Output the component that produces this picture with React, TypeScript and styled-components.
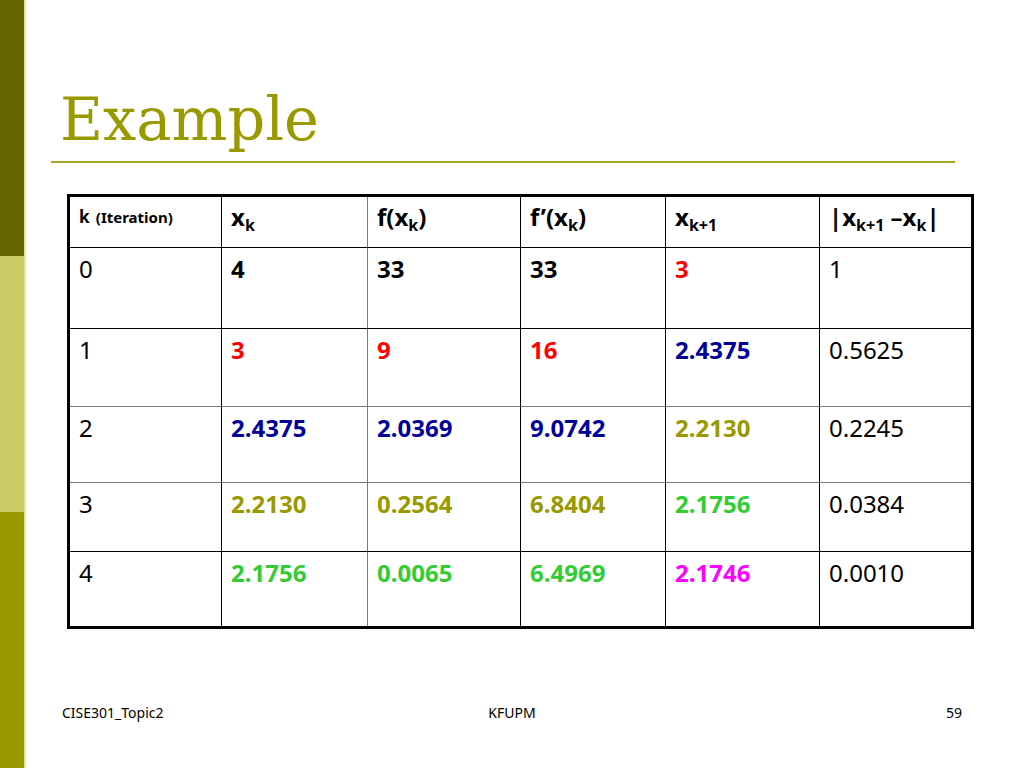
import React from 'react';
import styled, { createGlobalStyle } from 'styled-components';

const GlobalStyle = createGlobalStyle`
  html, body { margin: 0; padding: 0; background: #fff; }
  body { font-family: "Noto Sans", "Open Sans", sans-serif; }
`;

const Slide = styled.div`
  width: 1024px;
  height: 768px;
  display: flex;
  overflow: hidden;
  background: #fff;
`;

const Sidebar = styled.div`
  width: 24px;
  flex: none;
  display: flex;
  flex-direction: column;
  border-right: 2px solid #e6e68c;
`;

const Band = styled.div<{ $color: string }>`
  flex: 1;
  background: ${(p) => p.$color};
`;

const Main = styled.div`
  flex: 1;
  display: flex;
  flex-direction: column;
`;

const Title = styled.h1`
  margin: 90px 0 0 34px;
  height: 59px;
  font-family: "DejaVu Serif", "Liberation Serif", serif;
  font-weight: normal;
  font-size: 59px;
  line-height: 59px;
  letter-spacing: 0;
  color: #999900;
`;

const Rule = styled.div`
  margin: 12px 0 0 25px;
  width: 904px;
  height: 2px;
  background: #a6a622;
`;

const Grid = styled.div`
  margin: 31px 0 0 41px;
  width: 907px;
  box-sizing: border-box;
  border: 3px solid #000;
  display: grid;
  grid-template-columns: 152px 146px 153px 145px 154px 151px;
  grid-template-rows: 51px 81px 78px 76px 69px 74px;
  font-family: "Noto Sans", "Open Sans", sans-serif;
`;

const Cell = styled.div<{
  $lastCol: boolean;
  $lastRow: boolean;
  $vLine: string;
  $hLine: string;
  $color: string;
  $bold: boolean;
  $head?: boolean;
}>`
  box-sizing: border-box;
  padding: ${(p) => (p.$head ? '6px 8px 0 9px' : '7px 8px 0 9px')};
  border-right: ${(p) => (p.$lastCol ? 'none' : `1px solid ${p.$vLine}`)};
  border-bottom: ${(p) => (p.$lastRow ? 'none' : `1px solid ${p.$hLine}`)};
  font-size: 24px;
  line-height: 28.8px;
  font-weight: ${(p) => (p.$bold ? 700 : 400)};
  color: ${(p) => p.$color};
  white-space: nowrap;
`;

const Sub = styled.span`
  font-size: 16px;
  line-height: 0;
  vertical-align: -5px;
`;

const IterK = styled.span`
  font-size: 17px;
  position: relative;
  top: -3px;
`;

const IterLabel = styled.span`
  font-size: 15px;
  position: relative;
  top: -3px;
`;

const Footer = styled.div`
  margin: auto 0 0 36px;
  width: 900px;
  padding-bottom: 45px;
  display: grid;
  grid-template-columns: 1fr auto 1fr;
  font-family: "Noto Sans", "Open Sans", sans-serif;
  font-size: 14px;
  line-height: 20px;
  color: #000;
`;

const FootLeft = styled.span`
  text-align: left;
`;
const FootCenter = styled.span`
  text-align: center;
`;
const FootRight = styled.span`
  text-align: right;
`;

const C = {
  k: '#000000',
  r: '#ff0000',
  b: '#000099',
  o: '#999900',
  g: '#33cc33',
  m: '#ff00ff',
};

type Key = keyof typeof C;

const rows: [string, Key][][] = [
  [['0', 'k'], ['4', 'k'], ['33', 'k'], ['33', 'k'], ['3', 'r'], ['1', 'k']],
  [['1', 'k'], ['3', 'r'], ['9', 'r'], ['16', 'r'], ['2.4375', 'b'], ['0.5625', 'k']],
  [['2', 'k'], ['2.4375', 'b'], ['2.0369', 'b'], ['9.0742', 'b'], ['2.2130', 'o'], ['0.2245', 'k']],
  [['3', 'k'], ['2.2130', 'o'], ['0.2564', 'o'], ['6.8404', 'o'], ['2.1756', 'g'], ['0.0384', 'k']],
  [['4', 'k'], ['2.1756', 'g'], ['0.0065', 'g'], ['6.4969', 'g'], ['2.1746', 'm'], ['0.0010', 'k']],
];

const headers: React.ReactNode[] = [
  <>
    <IterK>k</IterK> <IterLabel>(Iteration)</IterLabel>
  </>,
  <>
    x<Sub>k</Sub>
  </>,
  <>
    f(x<Sub>k</Sub>)
  </>,
  <>
    f’(x<Sub>k</Sub>)
  </>,
  <>
    x<Sub>k+1</Sub>
  </>,
  <>
    |x<Sub>k+1</Sub> –x<Sub>k</Sub>|
  </>,
];

const vLineFor = (col: number) => (col === 1 ? '#7a7a7a' : '#000');
const hLineFor = (row: number) => (row === 1 || row === 2 ? '#7a7a7a' : '#000');

export default function App() {
  return (
    <>
      <GlobalStyle />
      <Slide>
        <Sidebar>
          <Band $color="#666600" />
          <Band $color="#cccc66" />
          <Band $color="#999900" />
        </Sidebar>
        <Main>
          <Title>Example</Title>
          <Rule />
          <Grid>
            {headers.map((h, ci) => (
              <Cell
                key={`h${ci}`}
                $head
                $lastCol={ci === 5}
                $lastRow={false}
                $vLine={vLineFor(ci)}
                $hLine="#000"
                $color="#000"
                $bold
              >
                {h}
              </Cell>
            ))}
            {rows.map((r, ri) =>
              r.map(([t, c], ci) => (
                <Cell
                  key={`${ri}-${ci}`}
                  $lastCol={ci === 5}
                  $lastRow={ri === rows.length - 1}
                  $vLine={vLineFor(ci)}
                  $hLine={hLineFor(ri)}
                  $color={C[c]}
                  $bold={ci !== 0 && ci !== 5}
                >
                  {t}
                </Cell>
              ))
            )}
          </Grid>
          <Footer>
            <FootLeft>CISE301_Topic2</FootLeft>
            <FootCenter>KFUPM</FootCenter>
            <FootRight>59</FootRight>
          </Footer>
        </Main>
      </Slide>
    </>
  );
}
